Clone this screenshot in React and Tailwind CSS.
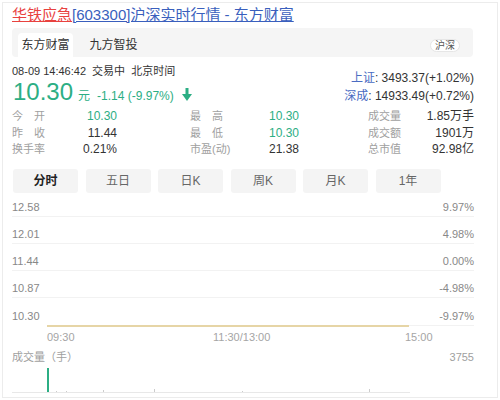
import React from "react";

const font = { fontFamily: '"Liberation Sans", "Noto Sans CJK SC", sans-serif' };

const stats = [
  [["今", "开"], "10.30", true, ["最", "高"], "10.30", true, "成交量", "1.85万手"],
  [["昨", "收"], "11.44", false, ["最", "低"], "10.30", true, "成交额", "1901万"],
  [["换手率"], "0.21%", false, ["市盈(动)"], "21.38", false, "总市值", "92.98亿"],
];

const periods = ["分时", "五日", "日K", "周K", "月K", "1年"];

const scale = [
  ["12.58", "9.97%", "h-[24px]"],
  ["12.01", "4.98%", "h-[27px]"],
  ["11.44", "0.00%", "h-[27px]"],
  ["10.87", "-4.98%", "h-[27px]"],
  ["10.30", "-9.97%", "h-[27px]"],
];

function Label({ parts }) {
  return (
    <span className={`flex ${parts.length > 1 ? "w-[33px] justify-between" : ""} text-[11px] text-[#a0a0a0]`}>
      {parts.map((p) => (
        <span key={p}>{p}</span>
      ))}
    </span>
  );
}

function DownArrow() {
  return (
    <svg width="10" height="13" viewBox="0 0 10 13" className="ml-[8px] self-center mt-[4px]">
      <rect x="3.5" y="0" width="3" height="7" fill="#2cae84" />
      <polygon points="0,6 10,6 5,13" fill="#2cae84" />
    </svg>
  );
}

export default function App() {
  return (
    <div className="w-[500px] h-[400px] bg-white p-[2px]" style={font}>
      <div className="h-[396px] border border-[#ececec] pl-[9px]">
        <div className="w-[462px]">
          {/* title */}
          <div className="h-[22px] flex items-center text-[15px] leading-none">
            <span className="text-[#e8423f] underline">华铁应急</span>
            <span className="text-[#3a5fbd] underline">[603300]沪深实时行情 - 东方财富</span>
          </div>

          {/* tabs */}
          <div className="mt-[3px] w-[461px] h-[29px] bg-[#f5f5f5] rounded-[4px] flex items-end text-[12px] text-[#333]">
            <div className="ml-[6px] w-[55px] h-[24px] bg-white rounded-t-[4px] flex items-center justify-center">东方财富</div>
            <div className="ml-[13px] w-[55px] h-[24px] flex items-center justify-center">九方智投</div>
            <div className="ml-auto mr-[13px] mb-[5px] h-[13px] px-[4px] rounded-full bg-white border border-[#e6e6e6] flex items-center text-[10px] text-[#555]">沪深</div>
          </div>

          {/* quote */}
          <div className="flex justify-between items-start">
            <div className="mt-[7px]">
              <div className="h-[14px] flex items-center text-[11px] text-[#333] whitespace-pre">08-09 14:46:42  交易中  北京时间</div>
              <div className="h-[28px] flex items-baseline text-[#2cae84]">
                <span className="text-[24px] leading-[28px] ml-px">10.30</span>
                <span className="ml-[5px] text-[12px]">元</span>
                <span className="ml-[7px] text-[12px]">-1.14 (-9.97%)</span>
                <DownArrow />
              </div>
            </div>
            <div className="mt-[12px] flex flex-col items-end text-[12px] text-[#333]">
              <div className="h-[18px] flex items-center"><span className="text-[#4a6cc2]">上证</span>: 3493.37(+1.02%)</div>
              <div className="h-[18px] flex items-center"><span className="text-[#4a6cc2]">深成</span>: 14933.49(+0.72%)</div>
            </div>
          </div>

          {/* stats */}
          <div className="mt-[2px]">
            {stats.map((r, i) => (
              <div key={i} className="h-[16.5px] flex items-center text-[12px] text-[#333]">
                <div className="w-[105px] flex justify-between items-center">
                  <Label parts={r[0]} />
                  <span className={r[2] ? "text-[#2cae84]" : ""}>{r[1]}</span>
                </div>
                <div className="ml-[73px] w-[178px] flex items-center">
                  <span className="w-[79px]"><Label parts={r[3]} /></span>
                  <span className={r[5] ? "text-[#2cae84]" : ""}>{r[4]}</span>
                </div>
                <div className="flex-1 flex justify-between items-center">
                  <Label parts={[r[6]]} />
                  <span>{r[7]}</span>
                </div>
              </div>
            ))}
          </div>

          {/* periods */}
          <div className="mt-[11px] flex gap-[7.5px] pl-px">
            {periods.map((p, i) => (
              <div
                key={p}
                className={`w-[65px] h-[24px] rounded-[3px] bg-[#f4f4f4] flex items-center justify-center text-[12px] ${i === 0 ? "font-bold text-[#222]" : "text-[#666]"}`}
              >
                {p}
              </div>
            ))}
          </div>

          {/* chart */}
          <div className="text-[11px] leading-[12px] text-[#888]">
            {scale.map(([l, r, h], i) => (
              <div key={l} className={`${h} flex justify-between items-end pb-[3px] ${i < 4 ? "border-b border-[#f2f2f2]" : ""}`}>
                <span>{l}</span>
                <span>{r}</span>
              </div>
            ))}
            <div className="h-[2px] flex">
              <div className="ml-[35px] w-[362px] h-[2px] bg-[#e6d5a6]" />
              <div className="flex-1 h-px bg-[#f2f2f2]" />
            </div>
            <div className="h-[20px] flex items-center pl-[35px] text-[#a5a5a5]">
              <span className="w-[166px]">09:30</span>
              <span className="w-[192px]">11:30/13:00</span>
              <span>15:00</span>
            </div>
            <div className="h-[21px] flex items-center justify-between text-[#a0a0a0]">
              <span>成交量（手）</span>
              <span>3755</span>
            </div>
            <div className="w-[398px] h-[25px] border-b border-[#e8e8e8] flex items-end">
              <div className="ml-[35px] w-[1.5px] h-[24px] bg-[#2cae84]" />
              <div className="ml-[7px] w-px h-[1px] bg-[#ccc]" />
              <div className="ml-[9px] w-px h-[1px] bg-[#ccc]" />
              <div className="ml-[36px] w-px h-[2px] bg-[#ccc]" />
              <div className="ml-[50px] w-px h-[3px] bg-[#ccc]" />
              <div className="ml-[87px] w-px h-[1px] bg-[#ccc]" />
              <div className="ml-[126px] w-px h-[3px] bg-[#ccc]" />
            </div>
          </div>
        </div>
      </div>
    </div>
  );
}
